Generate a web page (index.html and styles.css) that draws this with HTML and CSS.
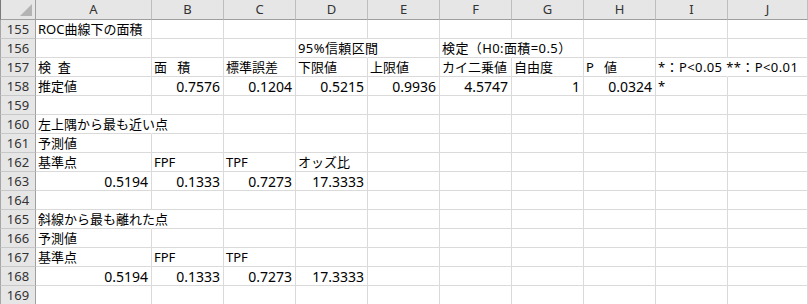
FILE: index.html
```html
<!DOCTYPE html>
<html lang="ja">
<head>
<meta charset="utf-8">
<link rel="stylesheet" href="styles.css">
</head>
<body>
<div class="sheet">
  <div class="c corner"><span class="tri"></span></div>
  <div class="c ch">A</div><div class="c ch">B</div><div class="c ch">C</div><div class="c ch">D</div><div class="c ch">E</div><div class="c ch">F</div><div class="c ch">G</div><div class="c ch">H</div><div class="c ch">I</div><div class="c ch">J</div>

  <div class="c rh">155</div>
  <div class="c">ROC曲線下の面積</div><div class="c"></div><div class="c"></div><div class="c"></div><div class="c"></div><div class="c"></div><div class="c"></div><div class="c"></div><div class="c"></div><div class="c"></div>

  <div class="c rh">156</div>
  <div class="c"></div><div class="c"></div><div class="c"></div><div class="c ov wide">95%信頼区間</div><div class="c"></div><div class="c ov wide">検定（H0:面積=0.5）</div><div class="c"></div><div class="c"></div><div class="c"></div><div class="c"></div>

  <div class="c rh">157</div>
  <div class="c pre">検  査</div><div class="c pre">面   積</div><div class="c">標準誤差</div><div class="c">下限値</div><div class="c">上限値</div><div class="c">カイ二乗値</div><div class="c">自由度</div><div class="c pre">P   値</div><div class="c ov wide">*：P&lt;0.05 **：P&lt;0.01</div><div class="c"></div>

  <div class="c rh">158</div>
  <div class="c">推定値</div><div class="c n">0.7576</div><div class="c n">0.1204</div><div class="c n">0.5215</div><div class="c n">0.9936</div><div class="c n">4.5747</div><div class="c n">1</div><div class="c n">0.0324</div><div class="c">*</div><div class="c"></div>

  <div class="c rh">159</div>
  <div class="c"></div><div class="c"></div><div class="c"></div><div class="c"></div><div class="c"></div><div class="c"></div><div class="c"></div><div class="c"></div><div class="c"></div><div class="c"></div>

  <div class="c rh">160</div>
  <div class="c ov">左上隅から最も近い点</div><div class="c"></div><div class="c"></div><div class="c"></div><div class="c"></div><div class="c"></div><div class="c"></div><div class="c"></div><div class="c"></div><div class="c"></div>

  <div class="c rh">161</div>
  <div class="c">予測値</div><div class="c"></div><div class="c"></div><div class="c"></div><div class="c"></div><div class="c"></div><div class="c"></div><div class="c"></div><div class="c"></div><div class="c"></div>

  <div class="c rh">162</div>
  <div class="c">基準点</div><div class="c">FPF</div><div class="c">TPF</div><div class="c">オッズ比</div><div class="c"></div><div class="c"></div><div class="c"></div><div class="c"></div><div class="c"></div><div class="c"></div>

  <div class="c rh">163</div>
  <div class="c n">0.5194</div><div class="c n">0.1333</div><div class="c n">0.7273</div><div class="c n">17.3333</div><div class="c"></div><div class="c"></div><div class="c"></div><div class="c"></div><div class="c"></div><div class="c"></div>

  <div class="c rh">164</div>
  <div class="c"></div><div class="c"></div><div class="c"></div><div class="c"></div><div class="c"></div><div class="c"></div><div class="c"></div><div class="c"></div><div class="c"></div><div class="c"></div>

  <div class="c rh">165</div>
  <div class="c ov">斜線から最も離れた点</div><div class="c"></div><div class="c"></div><div class="c"></div><div class="c"></div><div class="c"></div><div class="c"></div><div class="c"></div><div class="c"></div><div class="c"></div>

  <div class="c rh">166</div>
  <div class="c">予測値</div><div class="c"></div><div class="c"></div><div class="c"></div><div class="c"></div><div class="c"></div><div class="c"></div><div class="c"></div><div class="c"></div><div class="c"></div>

  <div class="c rh">167</div>
  <div class="c">基準点</div><div class="c">FPF</div><div class="c">TPF</div><div class="c"></div><div class="c"></div><div class="c"></div><div class="c"></div><div class="c"></div><div class="c"></div><div class="c"></div>

  <div class="c rh">168</div>
  <div class="c n">0.5194</div><div class="c n">0.1333</div><div class="c n">0.7273</div><div class="c n">17.3333</div><div class="c"></div><div class="c"></div><div class="c"></div><div class="c"></div><div class="c"></div><div class="c"></div>

  <div class="c rh">169</div>
  <div class="c"></div><div class="c"></div><div class="c"></div><div class="c"></div><div class="c"></div><div class="c"></div><div class="c"></div><div class="c"></div><div class="c"></div><div class="c"></div>
</div>
</body>
</html>
```
FILE: styles.css
```css
html, body {
  margin: 0;
  padding: 0;
  background: #ffffff;
  overflow: hidden;
}

.sheet {
  display: grid;
  grid-template-columns: 36px 116px repeat(8, 72px) 80px;
  grid-template-rows: 20px;
  grid-auto-rows: 19px;
  width: 808px;
  font-family: "Noto Sans", "Noto Sans CJK JP", sans-serif;
  font-size: 13px;
  color: #000000;
}

.c {
  box-sizing: border-box;
  border-right: 1px solid #dadada;
  border-bottom: 1px solid #dadada;
  padding: 1px 3px 0 2px;
  line-height: 17px;
  white-space: nowrap;
  min-width: 0;
}

.pre {
  white-space: pre;
}

.ov {
  border-right-color: transparent;
}

.wide {
  letter-spacing: 0.4px;
}

.n {
  text-align: right;
  font-size: 14px;
}

.ch {
  background: #e6e6e6;
  border-right-color: #bdbdbd;
  border-bottom-color: #9e9e9e;
  text-align: center;
  color: #333333;
  padding: 0;
  line-height: 19px;
}

.rh {
  background: #e6e6e6;
  border-left: 1px solid #a6a6a6;
  border-right-color: #a0a0a0;
  border-bottom-color: #c8c8c8;
  text-align: center;
  color: #333333;
  padding: 1px 0 0 0;
}

.corner {
  background: #e6e6e6;
  border-left: 1px solid #7a7a7a;
  border-right-color: #a0a0a0;
  border-bottom-color: #9e9e9e;
  display: flex;
  justify-content: flex-end;
  align-items: flex-end;
  padding: 0 3px 3px 0;
}

.tri {
  width: 0;
  height: 0;
  border-left: 12px solid transparent;
  border-bottom: 12px solid #b4b4b4;
}
```
